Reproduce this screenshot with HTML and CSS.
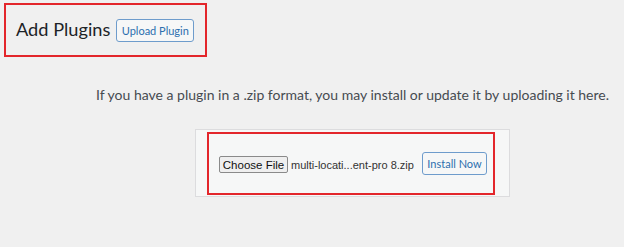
FILE: index.html
```html
<!DOCTYPE html>
<html lang="en">
<head>
  <meta charset="UTF-8">
  <title>Add Plugins</title>
  <link rel="stylesheet" href="styles.css">
</head>
<body>
  <div class="wrap">
    <div class="title-box">
      <h1 class="page-title">Add Plugins</h1>
      <button class="wp-btn upload-btn">Upload Plugin</button>
    </div>

    <p class="install-help">If you have a plugin in a .zip format, you may install or update it by uploading it here.</p>

    <div class="upload-box">
      <div class="upload-form">
        <button class="file-btn">Choose File</button>
        <span class="file-name">multi-locati...ent-pro 8.zip</span>
        <button class="wp-btn install-btn">Install Now</button>
      </div>
    </div>
  </div>
</body>
</html>
```

FILE: styles.css
```css
body {
  margin: 0;
  padding: 0;
  background-color: #f0f0f0;
  font-family: Lato, "Open Sans", sans-serif;
  color: #3c434a;
}

.wrap {
  padding: 3px 0 0 4px;
}

.title-box {
  display: flex;
  align-items: center;
  gap: 6px;
  width: 189px;
  height: 50px;
  padding: 0 0 0 10px;
  border: 2px solid #e3262b;
}

.page-title {
  margin: 0;
  font-family: Lato, "Open Sans", sans-serif;
  font-size: 18.2px;
  font-weight: 400;
  color: #1d2327;
  line-height: 24px;
  padding-bottom: 2px;
}

.wp-btn {
  font-family: Lato, "Open Sans", sans-serif;
  background: #f6f7f7;
  border: 1px solid #6e9ccc;
  border-radius: 3px;
  color: #2c6fae;
  cursor: pointer;
  padding: 0;
  white-space: nowrap;
}

.upload-btn {
  width: 78px;
  height: 23px;
  font-size: 11px;
}

.install-help {
  margin: 29px 0 0 92px;
  font-size: 14px;
  line-height: 18px;
  color: #464b50;
  white-space: nowrap;
}

.upload-box {
  margin: 25px 0 0 191px;
  width: 288px;
  height: 61px;
  padding: 2px 14px 3px 11px;
  border: 1px solid #dcdcde;
  background-color: #f6f7f7;
}

.upload-form {
  display: flex;
  align-items: center;
  height: 57px;
  padding: 2px 0 0 10px;
  border: 2px solid #e3262b;
}

.file-btn {
  font-family: "Liberation Sans", Arial, sans-serif;
  font-size: 11.5px;
  height: 17px;
  width: 69px;
  padding: 0;
  background: #efefef;
  border: 1px solid #8a8a8a;
  border-radius: 2px;
  color: #111;
  white-space: nowrap;
}

.file-name {
  font-family: "Liberation Sans", Arial, sans-serif;
  font-size: 11px;
  color: #333;
  margin-left: 3px;
  width: 131px;
  white-space: nowrap;
}

.install-btn {
  width: 65px;
  height: 23px;
  font-size: 11px;
  margin-top: -2px;
}
```
